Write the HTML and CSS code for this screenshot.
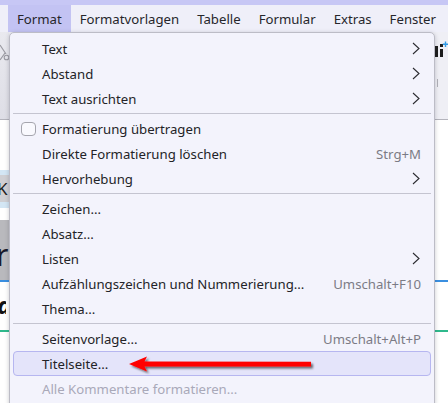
FILE: index.html
```html
<!DOCTYPE html>
<html lang="de">
<head>
<meta charset="utf-8">
<title>Format-Menü</title>
<link rel="stylesheet" href="styles.css">
</head>
<body>
<div class="app">
  <div class="titlestrip"></div>
  <nav class="menubar">
    <span class="mb-item active">Format</span>
    <span class="mb-item">Formatvorlagen</span>
    <span class="mb-item">Tabelle</span>
    <span class="mb-item">Formular</span>
    <span class="mb-item">Extras</span>
    <span class="mb-item">Fenster</span>
  </nav>
  <div class="workspace">
    <div class="toolbar">
      <div class="tb-left">
        <svg class="scissors" width="9" height="20" viewBox="0 0 9 20">
          <path d="M0 2 L6 11 M0 17 L5 10" stroke="#9a9aa2" stroke-width="1.2" fill="none"/>
          <circle cx="6.5" cy="14.5" r="2.3" stroke="#9a9aa2" stroke-width="1.1" fill="none"/>
        </svg>
      </div>
      <div class="tb-mid"></div>
      <div class="tb-right">
        <svg width="13" height="20" viewBox="0 0 13 20">
          <rect x="0" y="5" width="3" height="11" fill="#1c1c1c"/>
          <rect x="5" y="8" width="3" height="8" fill="#1c1c1c"/>
          <rect x="5" y="3" width="3" height="3" fill="#1c1c1c"/>
          <path d="M10.5 0.5 V6 M7.8 3.2 H13" stroke="#2f9be8" stroke-width="1.4"/>
        </svg>
        <span class="tick"></span>
      </div>
    </div>
    <div class="document">
      <div class="gap-a"></div>
      <div class="row-k"><span class="chip-k"><span class="glyph-k">K</span></span></div>
      <div class="gap-b"></div>
      <div class="row-r"><span class="chip-r"><span class="glyph-r">r</span></span></div>
      <div class="row-a"><span class="glyph-a">a</span></div>
    </div>
  </div>

  <div class="popup">
    <div class="item"><span class="icon"></span><span class="label">Text</span><span class="chev"><svg width="8" height="13" viewBox="0 0 8 13"><polyline points="1,1 7,6.5 1,12" fill="none" stroke="#2b2b30" stroke-width="1.1"/></svg></span></div>
    <div class="item"><span class="icon"></span><span class="label">Abstand</span><span class="chev"><svg width="8" height="13" viewBox="0 0 8 13"><polyline points="1,1 7,6.5 1,12" fill="none" stroke="#2b2b30" stroke-width="1.1"/></svg></span></div>
    <div class="item"><span class="icon"></span><span class="label">Text ausrichten</span><span class="chev"><svg width="8" height="13" viewBox="0 0 8 13"><polyline points="1,1 7,6.5 1,12" fill="none" stroke="#2b2b30" stroke-width="1.1"/></svg></span></div>
    <div class="sep"></div>
    <div class="item"><span class="icon"><span class="checkbox"></span></span><span class="label">Formatierung übertragen</span></div>
    <div class="item"><span class="icon"></span><span class="label">Direkte Formatierung löschen</span><span class="shortcut">Strg+M</span></div>
    <div class="item"><span class="icon"></span><span class="label">Hervorhebung</span><span class="chev"><svg width="8" height="13" viewBox="0 0 8 13"><polyline points="1,1 7,6.5 1,12" fill="none" stroke="#2b2b30" stroke-width="1.1"/></svg></span></div>
    <div class="sep"></div>
    <div class="item"><span class="icon"></span><span class="label">Zeichen...</span></div>
    <div class="item"><span class="icon"></span><span class="label">Absatz...</span></div>
    <div class="item"><span class="icon"></span><span class="label">Listen</span><span class="chev"><svg width="8" height="13" viewBox="0 0 8 13"><polyline points="1,1 7,6.5 1,12" fill="none" stroke="#2b2b30" stroke-width="1.1"/></svg></span></div>
    <div class="item"><span class="icon"></span><span class="label">Aufzählungszeichen und Nummerierung...</span><span class="shortcut">Umschalt+F10</span></div>
    <div class="item"><span class="icon"></span><span class="label">Thema...</span></div>
    <div class="sep"></div>
    <div class="item"><span class="icon"></span><span class="label">Seitenvorlage...</span><span class="shortcut">Umschalt+Alt+P</span></div>
    <div class="item hover"><span class="icon"></span><span class="label">Titelseite...</span></div>
    <div class="item disabled"><span class="icon"></span><span class="label">Alle Kommentare formatieren...</span></div>
  </div>

  <svg class="callout" width="448" height="403" viewBox="0 0 448 403">
    <defs>
      <filter id="sh" x="-10%" y="-50%" width="120%" height="200%">
        <feGaussianBlur in="SourceAlpha" stdDeviation="1.2"/>
        <feOffset dx="1.5" dy="1.5" result="b"/>
        <feComponentTransfer><feFuncA type="linear" slope="0.55"/></feComponentTransfer>
        <feMerge><feMergeNode/><feMergeNode in="SourceGraphic"/></feMerge>
      </filter>
    </defs>
    <path d="M129 364 L147 356.5 L144.5 361.6 L311 361.8 L311 366.4 L144.5 366.4 L147 371.5 Z" fill="#ff0000" filter="url(#sh)"/>
  </svg>
</div>
</body>
</html>
```

FILE: styles.css
```css
* { box-sizing: border-box; }
html, body { margin: 0; padding: 0; }
body {
  width: 448px;
  height: 403px;
  overflow: hidden;
  background: #ffffff;
  font-family: "Noto Sans", "DejaVu Sans", sans-serif;
  font-size: 13.2px;
  color: #232327;
}
.app {
  position: relative;
  width: 448px;
  height: 403px;
  overflow: hidden;
}
.titlestrip {
  height: 5px;
  background: #c7c7f5;
}
.menubar {
  height: 27px;
  display: flex;
  align-items: stretch;
  background: #efeff9;
  padding-left: 8px;
}
.mb-item {
  display: flex;
  align-items: center;
  padding: 0 9px;
  color: #26262b;
  white-space: nowrap;
}
.mb-item.active {
  background: #c3c3f3;
}
.workspace {
  display: flex;
  flex-direction: column;
  height: 371px;
}
.toolbar {
  height: 88px;
  display: flex;
  border-bottom: 1px solid #b4b4bc;
}
.tb-left {
  width: 9px;
  background: linear-gradient(#e9e9ef, #dedee6);
  padding-top: 11px;
}
.scissors { display: block; }
.tb-mid { flex: 1; background: #efeff5; }
.tb-right {
  width: 13px;
  background: #efeff5;
  padding-top: 9px;
  display: flex;
  flex-direction: column;
}
.tb-right svg { display: block; }
.tick {
  display: block;
  width: 1px;
  height: 8px;
  margin: 18px 0 0 2px;
  background: #b0b0b8;
}
.document {
  flex: 1;
  background: #ffffff;
  display: flex;
  flex-direction: column;
}
.gap-a { height: 50px; }
.row-k { height: 38px; }
.chip-k {
  display: block;
  width: 9px;
  height: 38px;
  background: #d3e6f4;
  padding-top: 5px;
  overflow: hidden;
}
.glyph-k {
  display: block;
  height: 27px;
  background: #cfcfd3;
  font-size: 17px;
  line-height: 27px;
  margin-left: -3px;
  color: #202020;
}
.gap-b { height: 12px; }
.row-r {
  height: 62px;
  border-bottom: 2px solid #3a8fe0;
}
.chip-r {
  display: block;
  width: 9px;
  height: 60px;
  background: #b9b9bd;
  overflow: hidden;
}
.glyph-r {
  display: block;
  font-size: 30px;
  line-height: 30px;
  padding-top: 20px;
  margin-left: -4px;
  color: #1a1a2a;
}
.row-a {
  height: 50px;
  border-bottom: 2px solid #2fb98c;
  overflow: hidden;
}
.glyph-a {
  display: block;
  width: 9px;
  overflow: hidden;
  font-size: 24px;
  font-weight: bold;
  font-style: italic;
  line-height: 24px;
  padding-top: 11px;
  margin-left: -3px;
  color: #111;
}

/* popup menu */
.popup {
  position: absolute;
  left: 9px;
  top: 32px;
  width: 426px;
  height: 390px;
  background: #f3f3fc;
  border: 1px solid #bcbcc6;
  border-radius: 5px 5px 0 0;
  box-shadow: 0 1px 4px rgba(40, 40, 60, 0.25);
  padding: 3px;
}
.item {
  height: 25px;
  display: flex;
  align-items: center;
  padding: 0 9px 0 7px;
  white-space: nowrap;
  border: 1px solid transparent;
  border-radius: 4px;
}
.icon {
  width: 21px;
  flex: none;
  display: flex;
  align-items: center;
}
.checkbox {
  display: block;
  width: 15px;
  height: 14px;
  border: 1px solid #a5a5ae;
  border-radius: 4px;
  background: #f9f9fe;
}
.label { flex: 1; color: #232327; }
.shortcut { color: #7b7b85; }
.chev {
  display: flex;
  align-items: center;
  margin-right: 1px;
}
.chev svg { display: block; }
.sep {
  height: 5px;
  display: flex;
  align-items: center;
}
.sep::before {
  content: "";
  display: block;
  width: 100%;
  height: 1px;
  background: #c4c4d0;
}
.item.hover {
  background: #e4e4fa;
  border-color: #b6b6f0;
}
.item.disabled .label { color: #a9a9b9; }

.callout {
  position: absolute;
  left: 0;
  top: 0;
  pointer-events: none;
}
```
